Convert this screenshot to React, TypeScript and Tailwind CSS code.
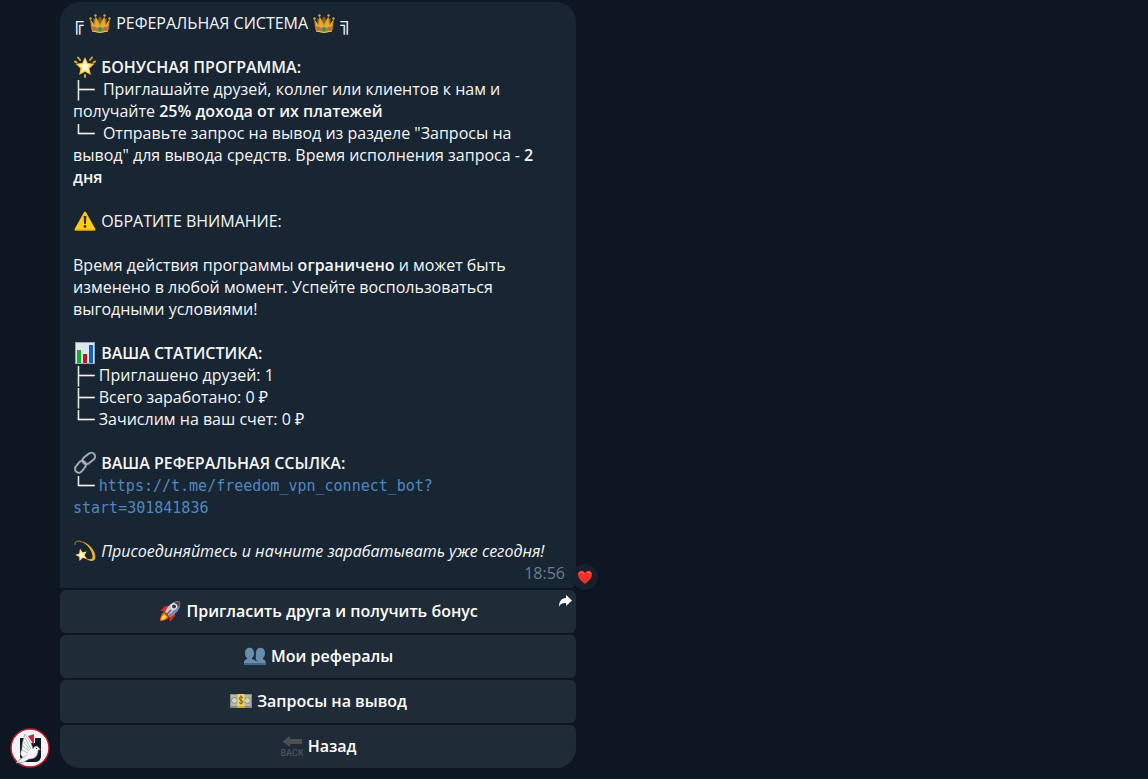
import type { ReactNode } from 'react'

const icon = 'mx-px inline-block size-[22px] align-[-5px]'

const Crown = () => (
    <svg viewBox="0 0 22 22" className={icon} aria-hidden="true">
        <path d="M4 6l4 3 3-5 3 5 4-3-1 8H5z" fill="#8a6215" />
        <path d="M1 7l4 5 1.500-8L11 12l4.500-8L17 12l4-5-1.500 11q-8.500 4-17 0z" fill="#c48a1e" />
        <path d="M2 8l3.500 6L7 6l4 8 4-8 1.500 8L20 8l-1 7q-8 3-16 0z" fill="#e2ab35" />
        <path d="M2.500 14q8.500 4 17 0l-.5 5q-8 3-16 0z" fill="#b67f1a" />
        <path d="M3 19q8 3 16 0" fill="none" stroke="#f0c85a" />
        <g fill="#d9a436">
            <circle cx="1.500" cy="6.500" r="1.200" />
            <circle cx="6.500" cy="3.500" r="1.200" />
            <circle cx="15.500" cy="3.500" r="1.200" />
            <circle cx="20.500" cy="6.500" r="1.200" />
        </g>
        <circle cx="11" cy="17" r="1.900" fill="#159a6c" />
        <circle cx="5.500" cy="16" r="1.300" fill="#cf4a90" />
        <circle cx="16.500" cy="16" r="1.300" fill="#cf4a90" />
    </svg>
)

const GlowingStar = () => (
    <svg viewBox="0 0 22 22" className={icon} aria-hidden="true">
        <path d="M4 1.500l2 2.500M18 1.500L16 4M1 5.500l1.500.8M21 5.500l-1.500.8M11 19v2" stroke="#dfa12c" strokeWidth="2" strokeLinecap="round" />
        <path d="M11 1l2.800 6 6.700.8-5 4.600 1.400 6.600-5.900-3.300L5.100 19l1.400-6.600-5-4.600L8.200 7z" fill="#f9c23a" />
        <path d="M11 3l2 5 5 .6-3.700 3.400 1 5-4.300-2.500L6.700 17l1-5L4 8.600 9 8z" fill="#ffeb93" />
        <path d="M11 5.500l1.300 3.600 3.200.5-2.500 2.100.6 2.800-2.600-1.500-2.600 1.500.6-2.800-2.500-2.100 3.200-.5z" fill="#fffbd6" />
    </svg>
)

const Warning = () => (
    <svg viewBox="0 0 22 22" className={icon} aria-hidden="true">
        <path d="M11 2.500L20.500 19.500H1.500z" fill="#ffcb16" stroke="#ffcb16" strokeWidth="2" strokeLinejoin="round" />
        <path d="M1 20h20" stroke="#eaa500" />
        <path d="M9.600 6h2.800l-.5 8h-1.800z" fill="#333" />
        <circle cx="11" cy="16.500" r="1.400" fill="#333" />
    </svg>
)

const BarChart = () => (
    <svg viewBox="0 0 22 22" className={icon} aria-hidden="true">
        <path d="M1 0h20v22H1z" fill="#97a5b1" />
        <path d="M2 1h18v20H2z" fill="#dfe7ee" />
        <path d="M3 8h4v13H3z" fill="#12ad2b" />
        <path d="M9 12h4v9H9z" fill="#c4151c" />
        <path d="M15 3h4v18h-4z" fill="#0d62bd" />
    </svg>
)

const Chain = () => (
    <svg viewBox="0 0 22 22" className={icon} aria-hidden="true">
        <g fill="none" stroke="#6f777f" strokeWidth="2.400">
            <rect x="-6.500" y="-3.800" width="13" height="7.600" rx="3.800" transform="translate(6.500 14.800) rotate(-52)" />
            <rect x="-7" y="-3.800" width="14" height="7.600" rx="3.800" transform="translate(14.800 6.500) rotate(-38)" />
        </g>
        <g fill="none" stroke="#c3c9ce" strokeWidth=".9">
            <rect x="-6.500" y="-3.800" width="13" height="7.600" rx="3.800" transform="translate(6.500 14.800) rotate(-52)" />
            <rect x="-7" y="-3.800" width="14" height="7.600" rx="3.800" transform="translate(14.800 6.500) rotate(-38)" />
        </g>
    </svg>
)

const DizzyStar = () => (
    <svg viewBox="0 0 22 22" className={icon} aria-hidden="true">
        <path d="M1 5C0-1 9 0 15 7" fill="none" stroke="#b98522" />
        <path d="M9 1.500c8 3 14 12 12 17.500-2 4-8 1-11-1.500 4 2 8 2.500 8.500 0C19 13 15 6 9 1.500z" fill="#e9b12e" />
        <path d="M6 8.500l2.500 3.700 4.200-.8-2.200 3.800 2.600 3.500-4.300-.8L5.500 21l-.3-4.200-4-1.900 4-1.500z" fill="#ffdf70" />
        <path d="M6.500 11l1.500 3 3-.8-1.500 2.300 1.200 1.800-2.500-.3L6 18.500v-2.300l-2.200-1.300 2.300-.7z" fill="#fff8ce" />
    </svg>
)

const Rocket = () => (
    <svg viewBox="0 0 22 22" className={icon} aria-hidden="true">
        <path d="M1 11l5-5 6 0-6 7-2-2zM16 10v6l-5 6-1-5 1-4z" fill="#cf2c22" />
        <path d="M5 12l5 5c-2 3-6 4-9 4 0-3 1-7 4-9z" fill="#ee5c1c" />
        <path d="M5 14l3 3c-2 2-4 3-6 3 0-2 1-4 3-6z" fill="#ffd52e" />
        <path d="M21 1c1 7-3 12-10 16l-5-5C9 5 14 1 21 1z" fill="#b9ccda" />
        <path d="M21 1c1 7-3 12-10 16l-2-2C14 12 19 7 21 1z" fill="#6d8ba3" />
        <path d="M15 2.500c2-1 4-1.500 6-1.500 0 2 0 4-1 6z" fill="#5c4a50" />
        <circle cx="15" cy="6.500" r="3.100" fill="#e8eff4" />
        <circle cx="15" cy="6.500" r="2" fill="#4a3036" />
        <path d="M7 15l5-5" stroke="#c9302a" strokeWidth="1.500" />
    </svg>
)

const People = () => (
    <svg viewBox="0 0 22 22" className={icon} aria-hidden="true">
        <g fill="#688eac">
            <path d="M12 8c0-7 9-7 9 0 0 3-1 4-2 5v1c2 1 3 2 3 6H12z" />
            <path d="M1 8c0-7 9-7 9 0 0 3-1 4-2 5v1c3 1 5 2 5 6H0c0-4 0-5 3-6v-1C2 12 1 11 1 8z" />
        </g>
        <path d="M0 18h22v2H0z" fill="#426a8d" />
        <path d="M11 8v6l2.500 2.500" fill="none" stroke="#2c4154" />
    </svg>
)

const Banknote = () => (
    <svg viewBox="0 0 22 22" className={icon} aria-hidden="true">
        <path d="M0 4h22v14H0z" fill="#858c82" />
        <path d="M1 5h20v11H1z" fill="#b4baac" />
        <circle cx="4.500" cy="10.500" r="3" fill="#cfd4c6" stroke="#7f8d7e" />
        <circle cx="17.500" cy="10.500" r="3" fill="#cfd4c6" stroke="#7f8d7e" />
        <path d="M7.500 4h7v14h-7z" fill="#f1d465" />
        <path d="M7.500 16h7v2h-7z" fill="#d9a930" />
        <path d="M13 8c-1-1.500-4-1.500-4 .5s4 1.500 4 3.500-3 2-4 .5M11 5.500v9" fill="none" stroke="#71591c" />
    </svg>
)

const BackArrow = () => (
    <svg viewBox="0 0 22 22" className={icon} aria-hidden="true">
        <path d="M1.500 6.500L9 1v3h12v5H9v3z" fill="#4d4f50" />
        <text x="11" y="20.500" textAnchor="middle" fontSize="9" fontWeight="500" fill="#505253" className="font-[Roboto]">
            BACK
        </text>
    </svg>
)

const Heart = () => (
    <svg viewBox="0 0 16 16" className="size-4" aria-hidden="true">
        <path d="M8 15C4 12 1 9 1 5.500 1 1.500 6 .5 8 4c2-3.500 7-2.500 7 1.500C15 9 12 12 8 15z" fill="#ef3028" />
        <path d="M2.500 5C3 2.500 6 2.500 7 5M10 4c1-1.500 3-1 3.500 1" fill="none" stroke="#ff796d" />
    </svg>
)

const Avatar = () => (
    <svg viewBox="0 0 40 40" className="size-10 shrink-0" role="img" aria-label="Freedom VPN">
        <circle cx="20" cy="20" r="19" fill="#f3f3f5" stroke="#ba1730" strokeWidth="1.500" />
        <path d="M10 10h7v5h8v-5h6v19q-1 5-6 5H16q-5-1-6-5z" fill="#111625" />
        <path d="M18 8l6-2v11z" fill="#c8283e" />
        <path
            d="M15 6c1 3 6 6 8 15 1-3 4-4 6-1l1.500 1.500-2.500.5c0 7-4 9-9 9l-5 3-8 1 7-6c-2-1-3-3-2-5 0-2 1-2 1-4 0-4 1-8 3-14z"
            fill="#f4f4f5"
            stroke="#8e929c"
            strokeWidth=".6"
        />
        <path d="M15 10l6 11M14 14l6 8M13 18l6 5M12 22l6 3M8 33l9-6" stroke="#a0a3ab" strokeWidth=".7" />
        <circle cx="26.500" cy="20.500" r=".6" fill="#111625" />
    </svg>
)

const Tree = ({ children }: { children: ReactNode }) => (
    <span className="font-['Liberation_Mono',monospace] text-lg leading-none">{children}</span>
)

const buttons = [
    { label: 'Пригласить друга и получить бонус', Icon: Rocket, shared: true },
    { label: 'Мои рефералы', Icon: People },
    { label: 'Запросы на вывод', Icon: Banknote },
    { label: 'Назад', Icon: BackArrow },
]

export default function App() {
    return (
        <main className="min-h-screen bg-[#0e1621] px-2.5 pt-0.5 font-['Open_Sans','Noto_Sans',sans-serif] text-base leading-[22px] text-[#f5f5f5]">
            <div className="flex items-end gap-2.5">
                <Avatar />
                <div className="w-full max-w-[516px]">
                    <article className="relative rounded-t-[20px] rounded-br-md bg-[#182533] px-[13px] pt-2.5 pb-1">
                        <p className="h-[22px]">
                            <Tree>╔</Tree> <Crown /> РЕФЕРАЛЬНАЯ СИСТЕМА <Crown /> <Tree>╗</Tree>
                        </p>

                        <section className="mt-[22px]">
                            <h2 className="h-[22px] font-semibold">
                                <GlowingStar /> БОНУСНАЯ ПРОГРАММА:
                            </h2>
                            <p>
                                <Tree>├─</Tree>&nbsp; Приглашайте друзей, коллег или клиентов к нам и получайте{' '}
                                <b className="font-semibold">25% дохода от их платежей</b>
                            </p>
                            <p>
                                <Tree>└─</Tree>&nbsp; Отправьте запрос на вывод из разделе "Запросы на вывод" для вывода средств.
                                Время исполнения запроса - <b className="font-semibold">2 дня</b>
                            </p>
                        </section>

                        <section className="mt-[22px]">
                            <h2 className="h-[22px]">
                                <Warning /> ОБРАТИТЕ ВНИМАНИЕ:
                            </h2>
                            <p className="mt-[22px]">
                                Время действия программы <b className="font-semibold">ограничено</b> и может быть изменено в
                                любой момент. Успейте воспользоваться выгодными условиями!
                            </p>
                        </section>

                        <section className="mt-[22px]">
                            <h2 className="h-[22px] font-semibold">
                                <BarChart /> ВАША СТАТИСТИКА:
                            </h2>
                            <p><Tree>├─</Tree> Приглашено друзей: 1</p>
                            <p><Tree>├─</Tree> Всего заработано: 0 ₽</p>
                            <p><Tree>└─</Tree> Зачислим на ваш счет: 0 ₽</p>
                        </section>

                        <section className="mt-[22px]">
                            <h2 className="h-[22px] font-semibold">
                                <Chain /> ВАША РЕФЕРАЛЬНАЯ ССЫЛКА:
                            </h2>
                            <p>
                                <Tree>└─</Tree>{' '}
                                <a
                                    href="https://t.me/freedom_vpn_connect_bot?start=301841836"
                                    className="font-['DejaVu_Sans_Mono',monospace] text-[15px] leading-none text-[#5288c1]"
                                >
                                    https://t.me/freedom_vpn_connect_bot?
                                    <wbr />
                                    start=301841836
                                </a>
                            </p>
                        </section>

                        <p className="mt-[22px] h-[22px]">
                            <DizzyStar /> <i>Присоединяйтесь и начните зарабатывать уже сегодня!</i>
                        </p>
                        <time className="-mr-0.5 block text-right text-[#6d7f8f]">18:56</time>
                        <button
                            aria-label="Реакция: сердце"
                            className="absolute -right-[22px] -bottom-0.5 flex size-[26px] items-center justify-center rounded-full bg-[#17212d] shadow"
                        >
                            <Heart />
                        </button>
                    </article>

                    <div className="mt-0.5 flex flex-col gap-0.5">
                        {buttons.map(({ label, Icon, shared }) => (
                            <button
                                key={label}
                                className="relative h-[43px] w-full rounded-md bg-[#1f2c38] pb-0.5 font-semibold text-white last:rounded-b-[20px]"
                            >
                                <Icon /> {label}
                                {shared && (
                                    <svg viewBox="0 0 14 14" className="absolute top-1 right-1 size-3.5" aria-hidden="true">
                                        <path d="M8 1l6 5.500L8 12V9C4 9 2 10 1 13 1 8 3 4 8 4z" fill="#fff" />
                                    </svg>
                                )}
                            </button>
                        ))}
                    </div>
                </div>
            </div>
        </main>
    )
}
